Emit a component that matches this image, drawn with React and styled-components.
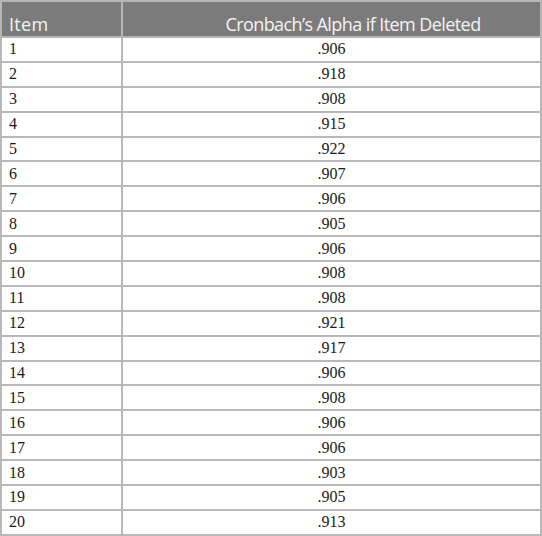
import React from "react";
import styled, { createGlobalStyle } from "styled-components";

const GlobalStyle = createGlobalStyle`
  html, body {
    margin: 0;
    padding: 0;
    background: #ffffff;
  }
`;

const rows = [
  [1, ".906"], [2, ".918"], [3, ".908"], [4, ".915"], [5, ".922"],
  [6, ".907"], [7, ".906"], [8, ".905"], [9, ".906"], [10, ".908"],
  [11, ".908"], [12, ".921"], [13, ".917"], [14, ".906"], [15, ".908"],
  [16, ".906"], [17, ".906"], [18, ".903"], [19, ".905"], [20, ".913"],
];

const Table = styled.table`
  width: 542px;
  border-collapse: collapse;
  table-layout: fixed;
`;

const HeadCell = styled.th`
  height: 36px;
  box-sizing: border-box;
  padding: 9px 0 0 ${(p) => (p.$center ? "43px" : "7px")};
  background: #7b7b7b;
  color: #f4f4f4;
  border: 2px solid #b6b6b6;
  font-family: "Open Sans", "Noto Sans", sans-serif;
  font-size: 18px;
  font-weight: 400;
  line-height: 1;
  letter-spacing: ${(p) => (p.$center ? "-0.58px" : "0.3px")};
  text-align: ${(p) => (p.$center ? "center" : "left")};
  vertical-align: middle;
`;

const Cell = styled.td`
  height: 22.9px;
  padding: 0 0 0 ${(p) => (p.$center ? "0" : "7px")};
  border: 2px solid #b8b8b8;
  font-family: "Liberation Serif", "Times New Roman", serif;
  font-size: 16px;
  color: #1a1a1a;
  text-align: ${(p) => (p.$center ? "center" : "left")};
  vertical-align: middle;
  line-height: 1;
`;

export default function App() {
  return (
    <>
      <GlobalStyle />
      <Table>
        <colgroup>
          <col style={{ width: 121 }} />
          <col />
        </colgroup>
        <thead>
          <tr>
            <HeadCell>Item</HeadCell>
            <HeadCell $center>Cronbach’s Alpha if Item Deleted</HeadCell>
          </tr>
        </thead>
        <tbody>
          {rows.map(([item, alpha]) => (
            <tr key={item}>
              <Cell>{item}</Cell>
              <Cell $center>{alpha}</Cell>
            </tr>
          ))}
        </tbody>
      </Table>
    </>
  );
}
